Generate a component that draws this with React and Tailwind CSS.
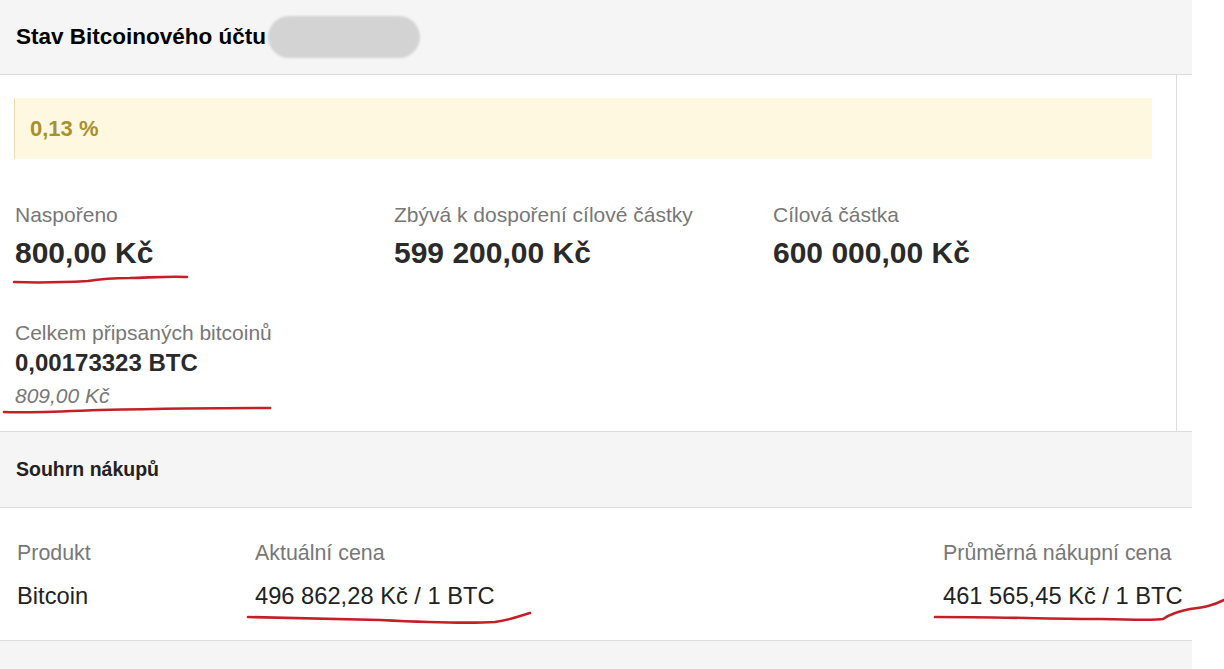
import React from "react";

export default function App() {
  return (
    <div className="relative w-[1224px] h-[669px] overflow-hidden bg-white font-[family-name:Liberation_Sans,Arial,sans-serif] text-[#222]">
      <div className="w-[1192px]">
        {/* header */}
        <div className="h-[75px] bg-[#f5f5f5] border-b border-[#dcdcdc] flex items-center pl-[16px]">
          <h1 className="text-[22.5px] font-bold text-black">Stav Bitcoinového účtu</h1>
          <div className="ml-[2px] w-[152px] h-[42px] rounded-full bg-[#d3d3d3] blur-[1px]" />
        </div>
        {/* body */}
        <div className="w-[1177px] border-r border-[#dcdcdc] pl-[14px] pr-[24px] pt-[23px] h-[356px]">
          <div className="h-[61px] bg-[#fff8e0] border-l border-[#eadba8] flex items-center pl-[15px]">
            <span className="text-[22px] font-bold text-[#a9902b]">0,13 %</span>
          </div>
          <div className="grid grid-cols-[379px_379px_1fr] pl-[1px] pt-[44px]">
            <div>
              <div className="text-[21px] text-[#777] leading-[24px]">Naspořeno</div>
              <div className="text-[30px] font-bold text-[#2a2a2a] mt-[9px] leading-[34px]">800,00 Kč</div>
            </div>
            <div>
              <div className="text-[21px] text-[#777] leading-[24px]">Zbývá k dospoření cílové částky</div>
              <div className="text-[30px] font-bold text-[#2a2a2a] mt-[9px] leading-[34px]">599 200,00 Kč</div>
            </div>
            <div>
              <div className="text-[21px] text-[#777] leading-[24px]">Cílová částka</div>
              <div className="text-[30px] font-bold text-[#2a2a2a] mt-[9px] leading-[34px]">600 000,00 Kč</div>
            </div>
          </div>
          <div className="pl-[1px] pt-[51px]">
            <div className="text-[21px] text-[#777] leading-[24px]">Celkem připsaných bitcoinů</div>
            <div className="text-[24px] font-bold text-[#2a2a2a] leading-[28px] mt-[4px]">0,00173323 BTC</div>
            <div className="text-[21px] italic text-[#777] leading-[24px] mt-[7px]">809,00 Kč</div>
          </div>
        </div>
        {/* summary header */}
        <div className="h-[77px] bg-[#f5f5f5] border-y border-[#dcdcdc] flex items-center pl-[16px]">
          <h2 className="text-[19.5px] font-bold text-[#222]">Souhrn nákupů</h2>
        </div>
        {/* summary row */}
        <div className="h-[133px] border-b border-[#dcdcdc] flex pt-[32px] pl-[17px]">
          <div className="w-[238px]">
            <div className="text-[21.4px] text-[#777] leading-[26px]">Produkt</div>
            <div className="text-[23.7px] text-[#222] leading-[28px] mt-[16px]">Bitcoin</div>
          </div>
          <div className="w-[688px]">
            <div className="text-[21.4px] text-[#777] leading-[26px]">Aktuální cena</div>
            <div className="text-[23.7px] text-[#222] leading-[28px] mt-[16px]">496 862,28 Kč / 1 BTC</div>
          </div>
          <div>
            <div className="text-[21.4px] text-[#777] leading-[26px]">Průměrná nákupní cena</div>
            <div className="text-[23.7px] text-[#222] leading-[28px] mt-[16px]">461 565,45 Kč / 1 BTC</div>
          </div>
        </div>
        <div className="h-[40px] bg-[#f5f5f5]" />
      </div>

      {/* hand-drawn red annotations */}
      <svg className="absolute inset-0 pointer-events-none" width="1224" height="669" viewBox="0 0 1224 669">
        <g fill="none" stroke="#c41f27" strokeWidth="2.6" strokeLinecap="round" strokeLinejoin="round">
          <path d="M14 282 C 40 283, 70 282, 88 281 C 100 279, 110 278, 130 278 C 160 277, 175 276, 187 277" />
          <path d="M4 412 C 30 413, 70 411, 100 410 C 150 409, 220 408, 270 408" />
          <path d="M248 617 C 300 618, 340 619, 380 620 C 420 622, 460 624, 495 622 C 510 620, 520 616, 530 613" />
          <path d="M935 617 C 1000 617, 1060 619, 1100 619 C 1140 620, 1158 620, 1163 619 C 1170 614, 1180 611, 1190 609 C 1205 607, 1212 606, 1224 600" />
        </g>
      </svg>
    </div>
  );
}
